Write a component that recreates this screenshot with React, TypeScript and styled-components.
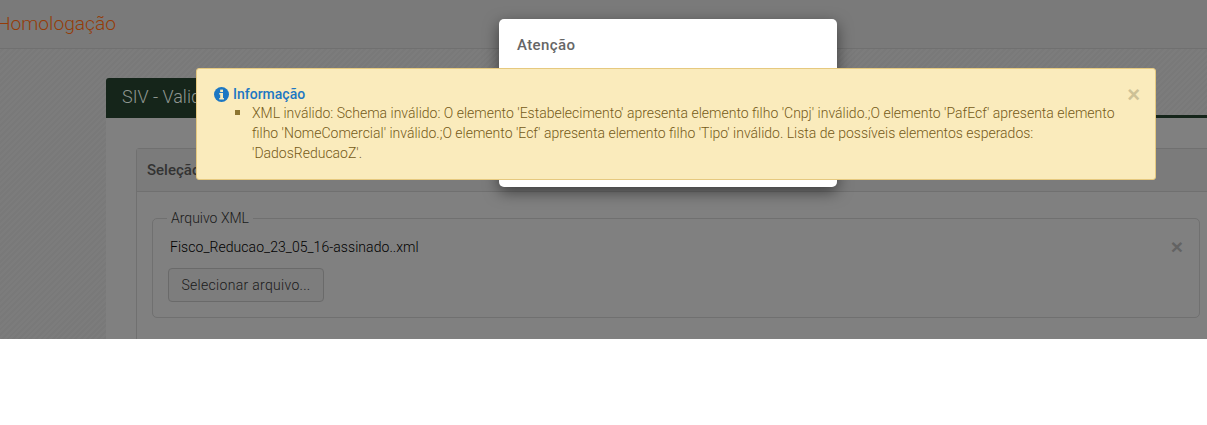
import React from "react";
import styled, { createGlobalStyle } from "styled-components";

const Global = createGlobalStyle`
  html, body { margin: 0; padding: 0; background: #fff; }
  body { font-family: Roboto, "Liberation Sans", sans-serif; font-weight: 300; }
`;

const Page = styled.div`
  position: relative;
  height: 339px;
  overflow: hidden;
  background: repeating-linear-gradient(135deg, #797979 0 2px, #7c7c7c 2px 4px);
`;

const Header = styled.header`
  box-sizing: border-box;
  height: 49px;
  background: #7a7a7a;
  border-bottom: 1px solid #707070;
  padding: 11px 0 0 0;
  overflow: hidden;
`;

const Brand = styled.div`
  margin-left: -3px;
  font-size: 19.2px;
  line-height: 26px;
  color: #953c08;
`;

const Main = styled.main`
  margin: 29px -60px 0 106px;
`;

const TabBar = styled.div`
  height: 40px;
  box-sizing: border-box;
  border-bottom: 3px solid #15251a;
`;

const Tab = styled.div`
  box-sizing: border-box;
  width: 200px;
  height: 40px;
  padding: 0 16px;
  background: #15251a;
  border-radius: 3px 3px 0 0;
  color: #8f9691;
  font-size: 18px;
  line-height: 38px;
  white-space: nowrap;
  overflow: hidden;
`;

const TabContent = styled.div`
  background: #808080;
  height: 260px;
  padding-top: 30px;
`;

const Card = styled.section`
  margin-left: 30px;
  border: 1px solid #707070;
  border-radius: 3px 0 0 0;
  height: 300px;
`;

const CardHeading = styled.div`
  box-sizing: border-box;
  height: 43px;
  padding: 0 10px;
  background: #7b7b7b;
  border-bottom: 1px solid #707070;
  color: #333;
  font-size: 15px;
  font-weight: 500;
  line-height: 42px;
`;

const CardBody = styled.div`
  padding: 18px 15px 0;
`;

const Field = styled.fieldset`
  box-sizing: border-box;
  width: 1048px;
  height: 108px;
  margin: 0;
  padding: 11px 15px 0;
  border: 1px solid #707070;
  border-radius: 5px;
`;

const Legend = styled.legend`
  padding: 0 4px;
  margin-left: -1px;
  color: #1a1a1a;
  font-size: 14px;
  line-height: 16px;
`;

const FileRow = styled.div`
  display: flex;
  justify-content: space-between;
  align-items: center;
  height: 20px;
  padding-left: 2px;
  color: #000;
  font-size: 14px;
  letter-spacing: 0.05px;
`;

const FileRemove = styled.span`
  margin-right: 1px;
  color: #636363;
  font-size: 21px;
  font-weight: 700;
  font-family: "Liberation Sans", sans-serif;
`;

const PickButton = styled.div`
  box-sizing: border-box;
  display: flex;
  align-items: center;
  justify-content: center;
  width: 156px;
  height: 34px;
  margin-top: 11px;
  border: 1px solid #6a6a6a;
  border-radius: 4px;
  background: #7d7d7d;
  color: #1a1a1a;
  font-size: 14px;
  letter-spacing: 0.3px;
`;

const Modal = styled.div`
  position: absolute;
  left: 499px;
  top: 19px;
  box-sizing: border-box;
  width: 338px;
  height: 168px;
  padding: 17px 18px;
  background: #fff;
  border-radius: 5px;
  box-shadow: 0 5px 15px rgba(0, 0, 0, 0.5);
`;

const ModalTitle = styled.div`
  color: #666;
  font-size: 15px;
  font-weight: 500;
  line-height: 18px;
  letter-spacing: 0.4px;
`;

const Alert = styled.div`
  position: absolute;
  left: 196px;
  top: 68px;
  box-sizing: border-box;
  width: 960px;
  height: 112px;
  padding: 16px 17px;
  background: #faebbc;
  border: 1px solid #e6c97f;
  border-radius: 3px;
`;

const AlertTitle = styled.div`
  display: flex;
  align-items: center;
  gap: 4px;
  color: #1c77c3;
  font-size: 14px;
  font-weight: 500;
  line-height: 18px;
`;

const AlertList = styled.ul`
  margin: 0;
  padding: 0 0 0 38px;
  list-style: none;
  color: #755a18;
  font-size: 14px;
  line-height: 20px;
`;

const AlertItem = styled.li`
  position: relative;

  &::before {
    content: "";
    position: absolute;
    left: -17px;
    top: 7px;
    width: 5px;
    height: 5px;
    background: #8c7530;
  }
`;

const AlertClose = styled.span`
  position: absolute;
  right: 15px;
  top: 16px;
  color: #cdc196;
  font-size: 22px;
  font-weight: 700;
  line-height: 20px;
  font-family: "Liberation Sans", sans-serif;
`;

const InfoIcon = () => (
  <svg width="15" height="15" viewBox="0 0 16 16" aria-hidden="true">
    <circle cx="8" cy="8" r="8" fill="#1c77c3" />
    <rect x="6.6" y="2.8" width="3" height="2.6" fill="#faebbc" />
    <path d="M5.6 6.4h4v5.2h1v1.6H5.6v-1.6h1V8H5.6z" fill="#faebbc" />
  </svg>
);

export default function App() {
  return (
    <>
      <Global />
      <Page>
        <Header>
          <Brand>Homologação</Brand>
        </Header>
        <Main>
          <TabBar>
            <Tab>SIV - Validação</Tab>
          </TabBar>
          <TabContent>
            <Card>
              <CardHeading>Seleção</CardHeading>
              <CardBody>
                <Field>
                  <Legend>Arquivo XML</Legend>
                  <FileRow>
                    <span>Fisco_Reducao_23_05_16-assinado..xml</span>
                    <FileRemove>×</FileRemove>
                  </FileRow>
                  <PickButton>Selecionar arquivo...</PickButton>
                </Field>
              </CardBody>
            </Card>
          </TabContent>
        </Main>
        <Modal>
          <ModalTitle>Atenção</ModalTitle>
        </Modal>
        <Alert>
          <AlertClose>×</AlertClose>
          <AlertTitle>
            <InfoIcon />
            Informação
          </AlertTitle>
          <AlertList>
            <AlertItem>
              XML inválido: Schema inválido: O elemento 'Estabelecimento' apresenta elemento filho 'Cnpj' inválido.;O
              elemento 'PafEcf' apresenta elemento filho 'NomeComercial' inválido.;O elemento 'Ecf' apresenta elemento
              filho 'Tipo' inválido. Lista de possíveis elementos esperados: 'DadosReducaoZ'.
            </AlertItem>
          </AlertList>
        </Alert>
      </Page>
    </>
  );
}
